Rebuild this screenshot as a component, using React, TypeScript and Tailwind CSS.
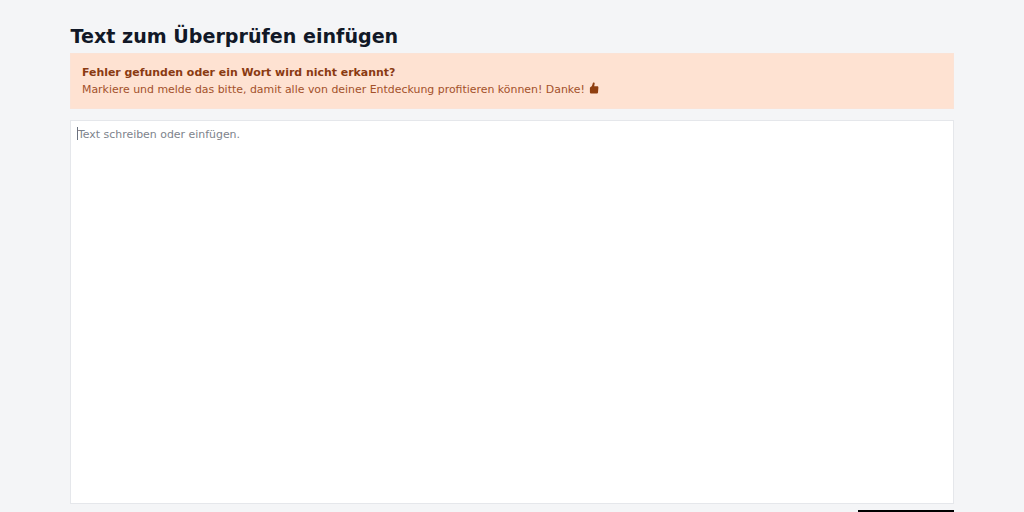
function Thumb() {
  return (
    <svg viewBox="0 0 10 12" className="ml-[4.500px] inline-block h-[12px] w-[10px] -translate-y-[1px] align-middle" fill="#8f3f10">
      <path d="M4.200 0.500c.8-.3 1.500.2 1.500 1 0 1-.5 1.700-.5 2.700h2.900c.9 0 1.300.5 1.300 1.200l-.4 5c-.1.700-.6 1.100-1.400 1.100H2.500c-1 0-1.600-.5-1.600-1.300V6.100c0-.7.700-1.100 1.500-1.500C3.400 4 3.500 1.200 4.200.500z" />
    </svg>
  );
}

export default function App() {
  return (
    <div className="h-[512px] overflow-hidden bg-[#f4f5f7] font-['DejaVu_Sans',sans-serif]">
      <div className="mx-auto w-[884px] pt-5">
        <h1 className="h-[33px] pt-[3px] pl-[0.5px] text-[19.1px] leading-7 font-bold text-[#111827]">Text zum Überprüfen einfügen</h1>
        <div className="h-[56px] border border-[#fbe3d6] bg-[#fee2d2] px-[11px] pt-[11px] text-[10.93px] leading-4 text-[#a3512a]">
          <p className="font-bold text-[#8a3a12]">Fehler gefunden oder ein Wort wird nicht erkannt?</p>
          <p className="flex items-center">
            <span className="translate-y-[0.5px] whitespace-pre">Markiere und melde das bitte, damit alle von deiner Entdeckung profitieren können! Danke!</span>
            <Thumb />
          </p>
        </div>
        <div className="mt-[11px] h-[384px] border border-[#e5e7eb] bg-white px-[6px] pt-[4px] text-[10.93px] leading-4 text-[#7d838c]">
          <span className="inline-block h-[13px] w-px translate-y-[2px] bg-[#6b7280]" />
          <span>Text schreiben oder einfügen.</span>
        </div>
        <div className="mt-[6px] flex justify-end">
          <div className="h-[4px] w-[96px] bg-black" />
        </div>
      </div>
    </div>
  );
}
